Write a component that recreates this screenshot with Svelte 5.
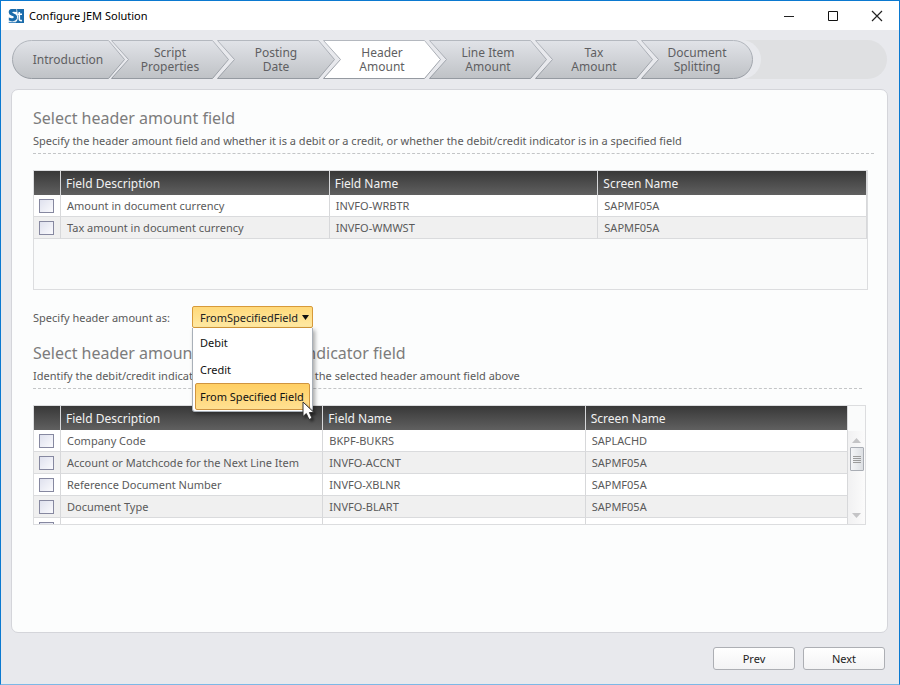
<script>
    const steps = [
        ['Introduction'],
        ['Script', 'Properties'],
        ['Posting', 'Date'],
        ['Header', 'Amount'],
        ['Line Item', 'Amount'],
        ['Tax', 'Amount'],
        ['Document', 'Splitting']
    ]

    const amountFields = [
        { description: 'Amount in document currency', name: 'INVFO-WRBTR', screen: 'SAPMF05A' },
        { description: 'Tax amount in document currency', name: 'INVFO-WMWST', screen: 'SAPMF05A' }
    ]

    const indicatorFields = [
        { description: 'Company Code', name: 'BKPF-BUKRS', screen: 'SAPLACHD' },
        { description: 'Account or Matchcode for the Next Line Item', name: 'INVFO-ACCNT', screen: 'SAPMF05A' },
        { description: 'Reference Document Number', name: 'INVFO-XBLNR', screen: 'SAPMF05A' },
        { description: 'Document Type', name: 'INVFO-BLART', screen: 'SAPMF05A' },
        { description: '', name: '', screen: '' }
    ]

    const kinds = [
        { value: 'Debit', label: 'Debit' },
        { value: 'Credit', label: 'Credit' },
        { value: 'FromSpecifiedField', label: 'From Specified Field' }
    ]

    let current = $state(3)
    let kind = $state('FromSpecifiedField')
    let open = $state(true)

    function toggle(e) {
        e.preventDefault()
        open = !open
    }

    function pick(value) {
        kind = value
        open = false
    }

    // rounded on the outside ends, arrow shaped in between
    function shape(i) {
        if (i == 0) return 'M19.5 .5 H96.5 L112.5 19.5 L96.5 38.5 H19.5 A19 19 0 0 1 19.5 .5 Z'
        if (i == steps.length - 1) return 'M.5 .5 H92.5 A19 19 0 0 1 92.5 38.5 H.5 L17.5 19.5 Z'
        return 'M.5 .5 H101.5 L117.5 19.5 L101.5 38.5 H.5 L17.5 19.5 Z'
    }
</script>

{#snippet grid(rows, label)}
    <table aria-label={label}>
        <thead>
            <tr>
                <th class="tick"></th>
                <th>Field Description</th>
                <th>Field Name</th>
                <th>Screen Name</th>
            </tr>
        </thead>
        <tbody>
            {#each rows as row}
                <tr>
                    <td class="tick"><input type="checkbox" aria-label={row.description || 'Field'}></td>
                    <td>{row.description}</td>
                    <td>{row.name}</td>
                    <td>{row.screen}</td>
                </tr>
            {/each}
        </tbody>
    </table>
{/snippet}

<div class="window">
    <header class="titlebar">
        <svg class="logo" width="16" height="16" viewBox="0 0 16 16" aria-hidden="true">
            <path d="M9 1 H16 V15 H8 V14 Q10 12 10 9 Z" fill="#1b6cab"/>
            <path d="M8.500 1 H3.500 Q.7 1.300 .7 4.200 Q.7 6.500 3.200 7.400 L5.300 8.300 Q6.300 9 5.300 9.900 Q3.600 10.700 .8 9.600 V12.600 Q4.500 14.200 7.300 12.600 Q9.600 11 9 8.200 Q8.600 6.600 6.200 5.700 Q3.800 4.900 4.300 4.100 Q5.400 3.300 8.500 4.100 Z" fill="#1b6cab"/>
            <path d="M.7 13.800 H8 V15 H.7 Z" fill="#4d8fc4"/>
            <path d="M11.300 4 V11 Q11.300 13 14 12.500 M9.500 6.200 H14" fill="none" stroke="#fff" stroke-width="1.600"/>
        </svg>
        <h1>Configure JEM Solution</h1>
        <div class="controls">
            <button aria-label="Minimize">
                <svg width="12" height="12" viewBox="0 0 12 12"><path d="M1 6.500 H11" stroke="#222" fill="none"/></svg>
            </button>
            <button aria-label="Maximize">
                <svg width="12" height="12" viewBox="0 0 12 12"><path d="M1.500 1.500 H10.500 V10.500 H1.500 Z" stroke="#111" fill="none"/></svg>
            </button>
            <button aria-label="Close">
                <svg width="12" height="12" viewBox="0 0 12 12"><path d="M1 1 L11 11 M11 1 L1 11" stroke="#222" stroke-width="1.200" fill="none"/></svg>
            </button>
        </div>
    </header>

    <nav class="track" aria-label="Steps">
        <div class="steps">
            {#each steps as step, i}
                <button class="step" class:first={i == 0} class:last={i == steps.length - 1} class:active={i == current} onclick={() => current = i}>
                    <svg class="shape" width="120" height="39" aria-hidden="true">
                        <defs>
                            <linearGradient id="fill{i}" x1="0" y1="0" x2="0" y2="1">
                                <stop offset="0" stop-color="#e1e3e8"/>
                                <stop offset="1" stop-color="#bfc2c6"/>
                            </linearGradient>
                            <linearGradient id="edge{i}" x1="0" y1="0" x2="0" y2="1">
                                <stop offset="0" stop-color="#b4b8bf"/>
                                <stop offset="1" stop-color="#959aa1"/>
                            </linearGradient>
                        </defs>
                        <path d={shape(i)} fill={i == current ? '#fff' : `url(#fill${i})`} stroke="url(#edge{i})"/>
                    </svg>
                    <span class="label">
                        {#each step as line}<span>{line}</span>{/each}
                    </span>
                </button>
            {/each}
        </div>
    </nav>

    <main class="card">
        <section>
            <div class="intro">
                <h2>Select header amount field</h2>
                <p>Specify the header amount field and whether it is a debit or a credit, or whether the debit/credit indicator is in a specified field</p>
            </div>
            <div class="list">
                {@render grid(amountFields, 'Header amount field')}
            </div>
        </section>

        <div class="kind">
            <label for="kind">Specify header amount as:</label>
            <div class="dropdown">
                <select id="kind" bind:value={kind} onmousedown={toggle}>
                    {#each kinds as k}
                        <option value={k.value}>{k.value}</option>
                    {/each}
                </select>
                <svg class="arrow" width="7" height="5" viewBox="0 0 7 5" aria-hidden="true"><path d="M0 0 H7 L3.500 5 Z" fill="#111"/></svg>
                {#if open}
                    <div class="menu">
                        {#each kinds as k}
                            <button class:chosen={k.value == kind} onclick={() => pick(k.value)}>{k.label}</button>
                        {/each}
                        <svg class="pointer" width="22" height="24" viewBox="0 0 22 24" aria-hidden="true">
                            <path d="M1 1 V15.500 L4.300 12.600 L7 18.500 L10 17.200 L7.400 11.500 H12 Z" fill="#fff" stroke="#333"/>
                        </svg>
                    </div>
                {/if}
            </div>
        </div>

        <section class="narrow">
            <div class="intro">
                <h2>Select header amount debit / credit indicator field</h2>
                <p>Identify the debit/credit indicator field associated with the selected header amount field above</p>
            </div>
            <div class="list scrolled">
                <div class="rows">
                    {@render grid(indicatorFields, 'Debit/credit indicator field')}
                </div>
                <div class="scrollbar">
                    <svg width="9" height="5" viewBox="0 0 9 5" aria-hidden="true"><path d="M0 5 L4.500 0 L9 5 Z" fill="#c4c4c6"/></svg>
                    <div class="thumb"><i></i><i></i><i></i><i></i></div>
                    <svg class="down" width="9" height="5" viewBox="0 0 9 5" aria-hidden="true"><path d="M0 0 L4.500 5 L9 0 Z" fill="#c4c4c6"/></svg>
                </div>
            </div>
        </section>
    </main>

    <footer>
        <button>Prev</button>
        <button>Next</button>
    </footer>
</div>

<style>
    :global(body) {
        margin: 0;
    }

    * {
        box-sizing: border-box;
    }

    .window {
        display: flex;
        flex-direction: column;
        min-height: 100vh;
        background: #e8e9ed;
        border: 1px solid #0b79d0;
        border-bottom-color: #7cb8e6;
        font-family: "Noto Sans", "Open Sans", sans-serif;
        font-size: 11px;
        color: #5a5a5a;
    }

    button,
    select {
        font: inherit;
        color: inherit;
    }

    .titlebar {
        display: flex;
        align-items: center;
        height: 29px;
        padding-left: 7px;
        background: #fff;
    }

    h1 {
        flex: 1;
        margin: 0 0 0 5px;
        font-size: 11px;
        font-weight: 400;
        color: #000;
    }

    .controls {
        display: flex;
    }

    .controls button {
        display: flex;
        align-items: center;
        justify-content: center;
        width: 44px;
        height: 28px;
        padding: 0;
        border: 0;
        background: none;
    }

    .track {
        margin: 10px 12px 0 11px;
        border-radius: 20px;
        background: #dfe0e2;
    }

    .steps {
        display: flex;
        width: max-content;
        padding-right: 8px;
        border-radius: 20px;
        background: #e8e9ed;
    }

    .step {
        position: relative;
        width: 118px;
        height: 39px;
        margin-right: -12px;
        padding: 0;
        border: 0;
        background: none;
        color: #5f5f62;
    }

    .step.first {
        width: 112px;
        margin-right: -13px;
    }

    .step.last {
        width: 112px;
        margin-right: 0;
    }

    .shape {
        position: absolute;
        top: 0;
        left: 0;
    }

    .label {
        position: relative;
        display: flex;
        flex-direction: column;
        font-size: 12px;
        line-height: 14px;
    }

    .card {
        flex: 1;
        margin: 10px 11px 0 10px;
        padding: 16px 13px 20px 21px;
        border: 1px solid #d4d5da;
        border-radius: 7px;
        background: #fcfdfd;
    }

    .intro {
        border-bottom: 1px dashed #c3c5c7;
    }

    h2 {
        margin: 0;
        font-size: 16px;
        line-height: 24px;
        font-weight: 400;
        color: #7c7c7c;
    }

    p {
        margin: 0;
        padding: 3px 0 5px;
        line-height: 15px;
        white-space: nowrap;
    }

    .list {
        height: 120px;
        margin: 16px 6px 0 0;
        border: 1px solid #dcdddf;
        background: #fafbfb;
    }

    .scrolled {
        display: flex;
        margin-right: -4px;
    }

    .rows {
        flex: 1;
        overflow: hidden;
    }

    .narrow {
        margin: 13px 12px 0 0;
    }

    table {
        width: 100%;
        table-layout: fixed;
        border-collapse: separate;
        border-spacing: 0;
    }

    th,
    td {
        overflow: hidden;
        padding: 0 0 0 6px;
        border-right: 1px solid #d7d8da;
        text-align: left;
        white-space: nowrap;
        font-weight: 400;
    }

    th {
        height: 24px;
        padding-left: 5px;
        background: linear-gradient(#383838, #606060);
        font-size: 12px;
        color: #f2f2f2;
    }

    td {
        height: 22px;
        border-bottom: 1px solid #dadbdd;
        background: #fff;
    }

    tr:nth-child(even) td {
        background: #f0f0f0;
    }

    .tick {
        width: 27px;
        padding: 0 0 0 5px;
    }

    input {
        display: block;
        appearance: none;
        width: 15px;
        height: 14px;
        margin: 0;
        border: 1px solid #8688a0;
        background: linear-gradient(135deg, #dfe1ee, #fafafd);
    }

    input:checked {
        background: #8688a0;
    }

    .kind {
        display: flex;
        align-items: center;
        margin-top: 16px;
    }

    .kind label {
        width: 159px;
    }

    .dropdown {
        position: relative;
        width: 121px;
    }

    select {
        display: block;
        appearance: none;
        width: 100%;
        height: 22px;
        padding: 0 0 0 7px;
        border: 1px solid #d79a3a;
        border-radius: 2px;
        background: linear-gradient(#ffd97a, #ffe9a3);
        color: #222;
        outline: none;
    }

    .arrow {
        position: absolute;
        top: 9px;
        right: 4px;
        pointer-events: none;
    }

    .menu {
        position: absolute;
        z-index: 1;
        top: 22px;
        left: 0;
        right: 0;
        padding: 1px 2px;
        border: 1px solid #a9b0b8;
        border-top: 0;
        border-radius: 0 0 3px 3px;
        background: #fff;
        box-shadow: 2px 2px 4px rgba(0, 0, 0, .35);
    }

    .menu button {
        display: block;
        width: 100%;
        height: 27px;
        padding: 0 0 0 4px;
        border: 1px solid transparent;
        border-radius: 2px;
        background: none;
        color: #111;
        text-align: left;
        white-space: nowrap;
    }

    .menu .chosen {
        border-color: #cf9440;
        background: linear-gradient(#ffcf63, #ffe092);
    }

    .pointer {
        position: absolute;
        right: -12px;
        bottom: -14px;
        filter: drop-shadow(2px 2px 1px rgba(0, 0, 0, .4));
        pointer-events: none;
    }

    .scrollbar {
        display: flex;
        flex-direction: column;
        align-items: center;
        width: 17px;
        margin-top: 25px;
        padding: 7px 0 6px;
        background: linear-gradient(90deg, #f1f1f2, #fbfbfb);
    }

    .thumb {
        display: flex;
        flex-direction: column;
        align-items: center;
        justify-content: center;
        gap: 1px;
        width: 14px;
        height: 24px;
        margin-top: 4px;
        border: 1px solid #a9adb4;
        border-radius: 1px;
        background: linear-gradient(90deg, #f4f5f7, #dcdfe3);
    }

    .thumb i {
        width: 8px;
        height: 1px;
        background: #9b9b9b;
    }

    .down {
        margin-top: auto;
    }

    footer {
        display: flex;
        justify-content: flex-end;
        gap: 8px;
        padding: 14px 14px 14px 0;
    }

    footer button {
        width: 82px;
        height: 23px;
        padding: 0;
        border: 1px solid #adafb4;
        border-radius: 3px;
        background: linear-gradient(#fff, #f3f3f4);
        color: #222;
    }
</style>
